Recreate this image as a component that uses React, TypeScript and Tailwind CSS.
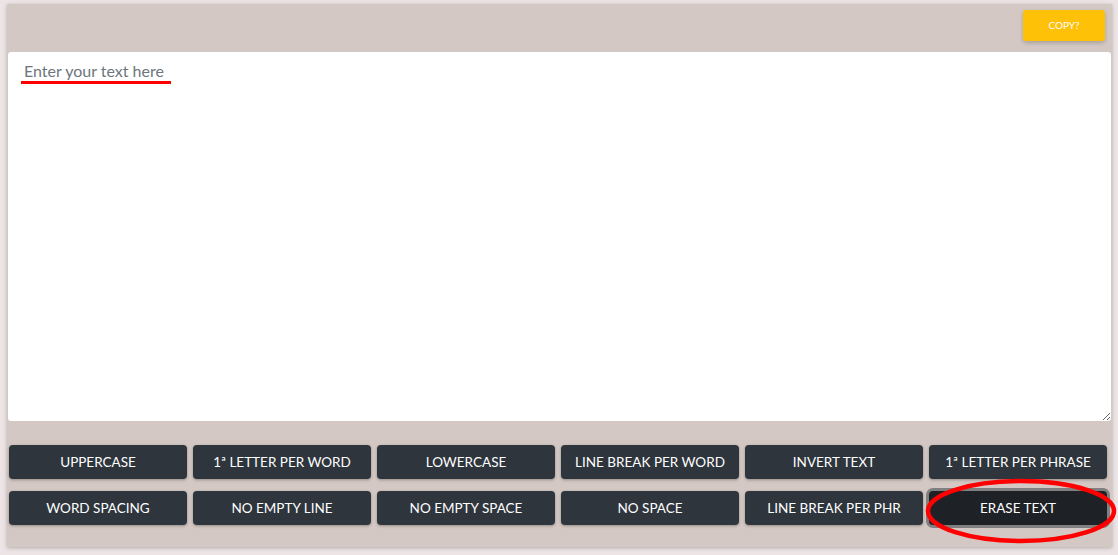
import React from 'react'

const buttons = [
    'UPPERCASE',
    '1ª LETTER PER WORD',
    'LOWERCASE',
    'LINE BREAK PER WORD',
    'INVERT TEXT',
    '1ª LETTER PER PHRASE',
    'WORD SPACING',
    'NO EMPTY LINE',
    'NO EMPTY SPACE',
    'NO SPACE',
    'LINE BREAK PER PHR',
]

export default function App() {
    return (
        <div className="w-[1118px] h-[555px] bg-[#ede5e5] pt-[4px] pl-[7px] font-['Lato',sans-serif]">
            <div className="relative w-[1105px] h-[543px] bg-[#d3c8c3] shadow-[0_1px_4px_rgba(0,0,0,0.25)] flex flex-col">
                {/* toolbar */}
                <div className="h-[48px] flex items-start justify-end pt-[6px] pr-[7px]">
                    <button className="w-[82px] h-[31px] rounded-[3px] bg-[#ffc107] text-white text-[10px] shadow-[0_2px_4px_rgba(0,0,0,0.2)]">
                        COPY?
                    </button>
                </div>

                {/* text area */}
                <div className="px-[1px] relative">
                    <textarea
                        placeholder="Enter your text here"
                        className="block w-full h-[369px] rounded-[3px] bg-white px-[16px] py-[7px] text-[16px] text-[#333] placeholder:text-[#6c757d] outline-none font-['Lato',sans-serif]"
                    />
                    <div className="absolute left-[14px] top-[29px] w-[150px] h-[3px] bg-[#ff0000]" />
                </div>

                {/* actions */}
                <div className="grid grid-cols-6 gap-x-[6px] gap-y-[12px] mt-[24px] pl-[2px] pr-[5px]">
                    {buttons.map((label) => (
                        <button
                            key={label}
                            className="h-[34px] rounded-[4px] bg-[#2e353c] text-white text-[13.5px] shadow-[0_1px_3px_rgba(0,0,0,0.3)]"
                        >
                            {label}
                        </button>
                    ))}
                    <button className="h-[34px] rounded-[4px] bg-[#1e2227] text-white text-[13.5px] ring-[3px] ring-[#808080]">
                        ERASE TEXT
                    </button>
                </div>

                {/* annotation */}
                <svg className="absolute left-[918px] top-[474px] pointer-events-none" width="194" height="66" viewBox="0 0 194 66">
                    <ellipse cx="96" cy="33" rx="93" ry="30" fill="none" stroke="#ff0000" strokeWidth="4.5" />
                </svg>
            </div>
        </div>
    )
}
